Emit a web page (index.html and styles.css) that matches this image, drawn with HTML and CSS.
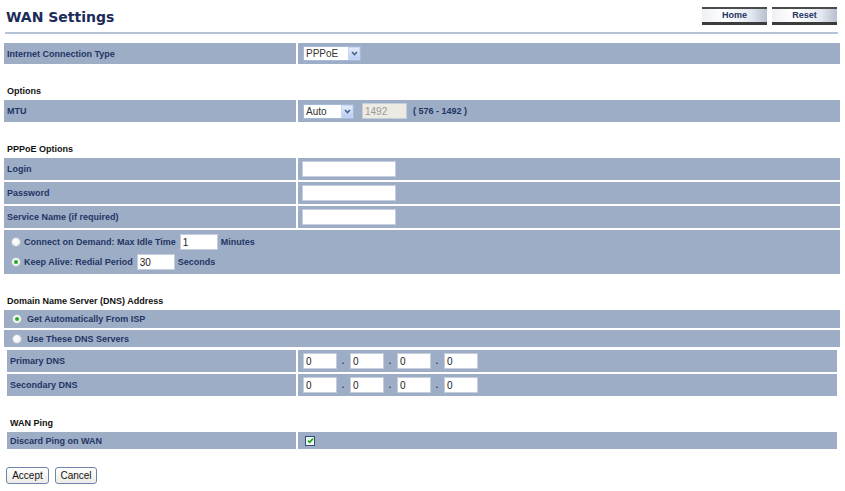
FILE: index.html
```html
<!DOCTYPE html>
<html>
<head>
<meta charset="utf-8">
<title>WAN Settings</title>
<link rel="stylesheet" href="styles.css">
</head>
<body>
<div class="page">
  <header class="header">
    <h1 class="title">WAN Settings</h1>
    <div class="nav">
      <button class="navbtn">Home</button>
      <button class="navbtn">Reset</button>
    </div>
  </header>

  <div class="form">
    <div class="group">
      <div class="row row-first">
        <div class="cell label">Internet Connection Type</div>
        <div class="cell value">
          <span class="select sel-pppoe"><span class="sel-text">PPPoE</span><span class="sel-arrow"><svg width="9" height="9" viewBox="0 0 9 9"><path d="M2 3 L4.5 5.5 L7 3" fill="none" stroke="#4a5f8a" stroke-width="1.6"/></svg></span></span>
        </div>
      </div>
    </div>

    <div class="section-title">Options</div>
    <div class="group">
      <div class="row">
        <div class="cell label">MTU</div>
        <div class="cell value">
          <span class="select sel-auto"><span class="sel-text">Auto</span><span class="sel-arrow"><svg width="9" height="9" viewBox="0 0 9 9"><path d="M2 3 L4.5 5.5 L7 3" fill="none" stroke="#4a5f8a" stroke-width="1.6"/></svg></span></span>
          <input class="txt txt-mtu" type="text" value="1492" disabled>
          <span class="range">( 576 - 1492 )</span>
        </div>
      </div>
    </div>

    <div class="section-title">PPPoE Options</div>
    <div class="group">
      <div class="row">
        <div class="cell label">Login</div>
        <div class="cell value"><input class="txt txt-wide" type="text"></div>
      </div>
      <div class="row">
        <div class="cell label">Password</div>
        <div class="cell value"><input class="txt txt-wide" type="password"></div>
      </div>
      <div class="row">
        <div class="cell label">Service Name (if required)</div>
        <div class="cell value"><input class="txt txt-wide" type="text"></div>
      </div>
      <div class="radio-block">
        <div class="radio-line">
          <span class="radio"></span><span class="rtext">Connect on Demand: Max Idle Time</span><input class="txt txt-small" type="text" value="1"><span class="rtext">Minutes</span>
        </div>
        <div class="radio-line">
          <span class="radio checked"></span><span class="rtext">Keep Alive: Redial Period</span><input class="txt txt-small" type="text" value="30"><span class="rtext">Seconds</span>
        </div>
      </div>
    </div>

    <div class="section-title">Domain Name Server (DNS) Address</div>
    <div class="group">
      <div class="radio-row r-first"><span class="radio checked"></span><span class="rtext">Get Automatically From ISP</span></div>
      <div class="radio-row"><span class="radio"></span><span class="rtext">Use These DNS Servers</span></div>
    </div>
    <div class="group inset dns">
      <div class="row row-inset">
        <div class="cell label">Primary DNS</div>
        <div class="cell value">
          <input class="txt txt-ip" type="text" value="0"><span class="dot">.</span><input class="txt txt-ip" type="text" value="0"><span class="dot">.</span><input class="txt txt-ip" type="text" value="0"><span class="dot">.</span><input class="txt txt-ip" type="text" value="0">
        </div>
      </div>
      <div class="row row-inset">
        <div class="cell label">Secondary DNS</div>
        <div class="cell value">
          <input class="txt txt-ip" type="text" value="0"><span class="dot">.</span><input class="txt txt-ip" type="text" value="0"><span class="dot">.</span><input class="txt txt-ip" type="text" value="0"><span class="dot">.</span><input class="txt txt-ip" type="text" value="0">
        </div>
      </div>
    </div>

    <div class="section-title inset-title">WAN Ping</div>
    <div class="group inset">
      <div class="row row-inset row-short">
        <div class="cell label">Discard Ping on WAN</div>
        <div class="cell value">
          <span class="check"><svg width="7" height="7" viewBox="0 0 7 7"><path d="M1 3.6 L2.8 5.3 L6 1.5" fill="none" stroke="#1ea61e" stroke-width="1.8"/></svg></span>
        </div>
      </div>
    </div>
  </div>

  <div class="actions">
    <button class="btn btn-accept">Accept</button>
    <button class="btn btn-cancel">Cancel</button>
  </div>
</div>
</body>
</html>
```

FILE: styles.css
```css
html, body {
  margin: 0;
  padding: 0;
  background: #ffffff;
}

body {
  font-family: "Liberation Sans", Arial, sans-serif;
  font-size: 9px;
  color: #1f3564;
  width: 845px;
}

/* ---------- header ---------- */
.header {
  display: flex;
  justify-content: space-between;
  align-items: flex-start;
  box-sizing: border-box;
  margin-left: 5px;
  width: 833px;
  height: 34px;
  padding-top: 7px;
  border-bottom: 2px solid #b7c3d7;
}

.title {
  margin: 2px 0 0 1px;
  font: bold 14px/17px "DejaVu Sans", Verdana, sans-serif;
  color: #1b2b5a;
}

.nav {
  display: flex;
  gap: 5px;
  margin-right: 1px;
}

.navbtn {
  box-sizing: border-box;
  width: 65px;
  height: 18px;
  padding: 0;
  border: 0;
  border-top: 2px solid #4b4b4b;
  border-bottom: 3px solid #3b3b3b;
  background: linear-gradient(to right, #eef0f4 0%, #ffffff 35%, #e4e8ef 75%, #b7c0cf 100%);
  font: bold 9px/13px "Liberation Sans", Arial, sans-serif;
  color: #1f3564;
  cursor: pointer;
}

/* ---------- form ---------- */
.form {
  display: flex;
  flex-direction: column;
  margin: 9px 0 0 4px;
  width: 836px;
}

.group {
  display: flex;
  flex-direction: column;
  gap: 2px;
}

.group.inset {
  margin: 0 3px 0 3px;
}

.group.dns {
  margin-top: 3px;
}

.section-title {
  margin: 20px 0 2px;
  padding-left: 3px;
  height: 14px;
  line-height: 14px;
  font-weight: bold;
  color: #111111;
}

.section-title.inset-title {
  padding-left: 6px;
}

.row {
  display: grid;
  grid-template-columns: 292px 1fr;
  column-gap: 2px;
  height: 22px;
}

.row-first {
  height: 21px;
}

.row-inset {
  grid-template-columns: 289px 1fr;
}

.row-short {
  height: 17px;
}

.cell {
  display: flex;
  align-items: center;
  background: #9eadc6;
}

.label {
  padding-left: 3px;
  font-weight: bold;
  color: #1f3564;
}

.value {
  padding-left: 4px;
}

/* ---------- fake select ---------- */
.select {
  box-sizing: border-box;
  display: inline-flex;
  align-items: stretch;
  height: 15px;
  margin-left: 1px;
  border: 1px solid #a5b9d9;
  background: #ffffff;
  font: 10px/13px "Liberation Sans", Arial, sans-serif;
  color: #333333;
}

.sel-pppoe { width: 58px; }
.sel-auto { width: 51px; }

.sel-text {
  flex: 1;
  padding-left: 2px;
}

.sel-arrow {
  box-sizing: border-box;
  width: 12px;
  margin: 0;
  display: flex;
  align-items: center;
  justify-content: center;
  border: 1px solid #c9d7f5;
  background: linear-gradient(#e3ebfc, #bccdf2);
}

/* ---------- text inputs ---------- */
.txt {
  box-sizing: border-box;
  height: 16px;
  margin: 0;
  padding: 0 2px;
  border: 1px solid #c4cddc;
  background: #ffffff;
  font: 10px "Liberation Sans", Arial, sans-serif;
  color: #222222;
  outline: none;
}

.txt-wide { width: 94px; }

.txt-mtu {
  width: 45px;
  margin-left: 8px;
  background: #eceae2;
  color: #9a9a9a;
}

.range {
  margin-left: 6px;
  font-weight: bold;
  color: #1f3564;
}

.txt-ip {
  width: 34px;
  margin-left: 1px;
}

.dot {
  display: inline-block;
  width: 12px;
  text-align: center;
  font-weight: bold;
  color: #1f3564;
}

/* ---------- radios ---------- */
.radio-block {
  display: flex;
  flex-direction: column;
  gap: 4px;
  padding: 4px 0 4px 7px;
  background: #9eadc6;
}

.radio-line {
  display: flex;
  align-items: center;
  height: 16px;
}

.radio-line .txt-small {
  width: 38px;
  margin: 0 3px 0 4px;
}

.radio {
  box-sizing: border-box;
  display: inline-block;
  width: 10px;
  height: 10px;
  margin-right: 3px;
  border-radius: 50%;
  border: 1px solid #b3bccb;
  background: radial-gradient(circle at 40% 40%, #ffffff 0%, #f2f2f2 60%, #d8dce4 100%);
  position: relative;
}

.radio.checked::after {
  content: "";
  position: absolute;
  left: 2px;
  top: 2px;
  width: 4px;
  height: 4px;
  border-radius: 50%;
  background: #25a82a;
}

.rtext {
  font-weight: bold;
  color: #1f3564;
}

.radio-row {
  display: flex;
  align-items: center;
  height: 18px;
  padding-left: 8px;
  background: #9eadc6;
}

.radio-row + .radio-row {
  height: 17px;
}

.radio-row .radio {
  margin-right: 5px;
}

/* ---------- checkbox ---------- */
.check {
  box-sizing: border-box;
  display: inline-flex;
  align-items: center;
  justify-content: center;
  width: 10px;
  height: 10px;
  margin-left: 3px;
  border: 1px solid #2c4f7c;
  background: #f4f6f4;
}

/* ---------- bottom buttons ---------- */
.actions {
  display: flex;
  gap: 6px;
  margin: 18px 0 0 6px;
}

.btn {
  box-sizing: border-box;
  height: 17px;
  padding: 0;
  border: 1px solid #6f84ad;
  border-radius: 3px;
  background: linear-gradient(#ffffff, #ecebe6);
  font: 10px/14px "Liberation Sans", Arial, sans-serif;
  color: #111111;
  cursor: pointer;
}

.btn-accept { width: 43px; }
.btn-cancel { width: 42px; }
```
